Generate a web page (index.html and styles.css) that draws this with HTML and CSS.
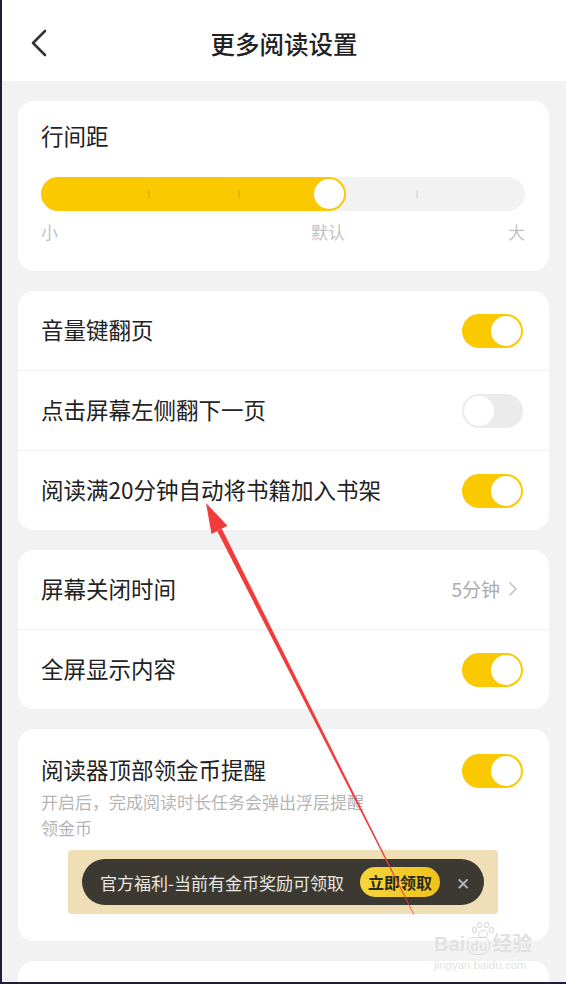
FILE: index.html
```html
<!DOCTYPE html>
<html lang="zh-CN">
<head>
    <meta charset="UTF-8">
    <meta name="viewport" content="width=device-width, initial-scale=1.0">
    <title>更多阅读设置</title>
    <link rel="stylesheet" href="styles.css">
</head>
<body>
    <div class="screen">
        <header class="topbar">
            <svg class="back" width="18" height="28" viewBox="0 0 18 28">
                <path d="M15 2 L3 14 L15 26" fill="none" stroke="#333" stroke-width="2.6" stroke-linecap="round" stroke-linejoin="round"/>
            </svg>
            <h1 class="title">更多阅读设置</h1>
            <span></span>
        </header>

        <main class="content">
            <section class="card spacing-card">
                <div class="card-label">行间距</div>
                <div class="slider">
                    <div class="slider-fill" style="width: 305px;"></div>
                    <span class="tick on" style="left: 107px;"></span>
                    <span class="tick on" style="left: 197px;"></span>
                    <span class="tick" style="left: 375px;"></span>
                    <span class="knob" style="left: 273px;"></span>
                </div>
                <div class="scale-labels">
                    <span>小</span>
                    <span class="mid">默认</span>
                    <span class="end">大</span>
                </div>
            </section>

            <section class="card">
                <div class="row">
                    <span class="row-label">音量键翻页</span>
                    <span class="switch on"></span>
                </div>
                <div class="row">
                    <span class="row-label">点击屏幕左侧翻下一页</span>
                    <span class="switch"></span>
                </div>
                <div class="row">
                    <span class="row-label">阅读满20分钟自动将书籍加入书架</span>
                    <span class="switch on"></span>
                </div>
            </section>

            <section class="card">
                <div class="row">
                    <span class="row-label">屏幕关闭时间</span>
                    <span class="value">5分钟
                        <svg width="10" height="16" viewBox="0 0 10 16">
                            <path d="M2 2 L8 8 L2 14" fill="none" stroke="#c4c4c4" stroke-width="1.6" stroke-linecap="round" stroke-linejoin="round"/>
                        </svg>
                    </span>
                </div>
                <div class="row">
                    <span class="row-label">全屏显示内容</span>
                    <span class="switch on"></span>
                </div>
            </section>

            <section class="card coin-card">
                <div class="coin-head">
                    <span class="row-label">阅读器顶部领金币提醒</span>
                    <span class="switch on"></span>
                </div>
                <p class="hint">开启后，完成阅读时长任务会弹出浮层提醒领金币</p>
                <div class="banner">
                    <div class="banner-pill">
                        <span class="banner-text">官方福利-当前有金币奖励可领取</span>
                        <span class="banner-btn">立即领取</span>
                        <span class="banner-close">✕</span>
                    </div>
                </div>
            </section>

            <section class="card last-card"></section>
        </main>

        <!-- annotation arrow drawn over the screenshot -->
        <svg class="arrow" width="566" height="984" viewBox="0 0 566 984">
            <polygon points="221.8,528.7 217.2,531 413.8,915 414.4,914.7" fill="#f23b3b"/>
            <polygon points="206,503 227.5,525.8 211.5,533.9" fill="#f23b3b"/>
        </svg>

        <div class="watermark">
            <div class="wm-paw">
                <i></i><i></i><i></i><i></i><b></b>
            </div>
            <div class="wm-logo">Bai<span class="wm-du">du</span><span class="wm-cn">经验</span></div>
            <div class="wm-url">jingyan.baidu.com</div>
        </div>
    </div>
</body>
</html>
```

FILE: styles.css
```css
* {
    box-sizing: border-box;
}
body {
    margin: 0;
    font-family: "Noto Sans CJK SC", "Noto Sans", sans-serif;
    color: #222;
}
.screen {
    position: relative;
    width: 566px;
    height: 984px;
    overflow: hidden;
    background: #f2f2f2;
    border-left: 2px solid #1e1e36;
    border-bottom: 2px solid #1e1e36;
}
.topbar {
    height: 81px;
    background: #fff;
    display: grid;
    grid-template-columns: 70px 1fr 70px;
    align-items: center;
    padding-top: 5px;
}
.back {
    margin-left: 28px;
}
.title {
    margin: 0;
    text-align: center;
    font-size: 24.5px;
    font-weight: 500;
    color: #222;
}
.content {
    display: flex;
    flex-direction: column;
    gap: 20px;
    padding: 20px 17px 0 16px;
}
.card {
    background: #fff;
    border-radius: 16px;
}

/* line spacing */
.spacing-card {
    padding: 18px 24px 24px 23px;
    height: 170px;
}
.card-label {
    font-size: 22.5px;
    line-height: 32px;
}
.slider {
    position: relative;
    margin-top: 26px;
    height: 34px;
    border-radius: 17px;
    background: #f2f2f2;
}
.slider-fill {
    height: 34px;
    border-radius: 17px;
    background: #fbc900;
}
.tick {
    position: absolute;
    top: 13px;
    width: 2px;
    height: 8px;
    background: #dedede;
}
.tick.on {
    background: #e2b500;
}
.knob {
    position: absolute;
    top: 2px;
    width: 30px;
    height: 30px;
    border-radius: 50%;
    background: #fff;
}
.scale-labels {
    display: flex;
    margin-top: 9px;
    font-size: 17px;
    line-height: 24px;
    color: #c2c2c2;
}
.scale-labels .mid {
    margin-left: 253px;
}
.scale-labels .end {
    margin-left: auto;
}

/* rows */
.row {
    display: flex;
    align-items: center;
    justify-content: space-between;
    height: 80px;
    padding: 0 26px 0 23px;
    font-size: 22.5px;
    border-top: 1px solid #f2f2f2;
}
.row:first-child {
    height: 79px;
    border-top: none;
}
.row-label {
    padding-bottom: 4px;
}
.switch {
    position: relative;
    width: 61px;
    height: 34px;
    border-radius: 17px;
    background: #ebebeb;
    flex-shrink: 0;
}
.switch::after {
    content: "";
    position: absolute;
    top: 2px;
    left: 2px;
    width: 30px;
    height: 30px;
    border-radius: 50%;
    background: #fff;
}
.switch.on {
    background: #fbc900;
}
.switch.on::after {
    left: 29px;
}
.value {
    display: flex;
    align-items: center;
    gap: 8px;
    font-size: 19px;
    color: #ababab;
    margin-right: 5px;
    padding-bottom: 2px;
}

/* coin reminder */
.coin-card {
    padding: 24px 26px 27px 23px;
}
.coin-head {
    display: flex;
    align-items: center;
    justify-content: space-between;
    font-size: 22.5px;
    line-height: 32px;
}
.hint {
    margin: 0 0 2px;
    width: 330px;
    font-size: 17px;
    line-height: 26px;
    color: #b5b5b5;
}
.banner {
    margin: 9px 0 0 27px;
    width: 430px;
    height: 64px;
    padding: 9px 14px;
    background: #f0dfb6;
    border-radius: 4px;
}
.banner-pill {
    display: flex;
    align-items: center;
    height: 46px;
    padding: 0 14px 0 18px;
    border-radius: 23px;
    background: #3b3932;
}
.banner-text {
    font-size: 17px;
    color: #e9e7e1;
}
.banner-btn {
    margin-left: 16px;
    width: 80px;
    height: 30px;
    line-height: 30px;
    text-align: center;
    border-radius: 15px;
    background: linear-gradient(90deg, #f7d53c, #efc21a);
    font-size: 16px;
    font-weight: 700;
    color: #2b2a1f;
}
.banner-close {
    margin-left: auto;
    font-size: 17px;
    color: #bcbcbc;
}
.last-card {
    height: 40px;
}

/* overlays */
.arrow {
    position: absolute;
    top: 0;
    left: -2px;
    pointer-events: none;
}
.watermark {
    position: absolute;
    left: 432px;
    top: 930px;
    color: rgba(205, 205, 205, 0.6);
    font-family: "Liberation Sans", sans-serif;
    text-shadow: 0 0 1px #fff;
}
.wm-paw {
    position: absolute;
    left: 38px;
    top: -8px;
    width: 22px;
    height: 18px;
}
.wm-paw i {
    position: absolute;
    width: 5px;
    height: 6px;
    border-radius: 50%;
    border: 1px solid rgba(200, 200, 200, 0.7);
}
.wm-paw i:nth-child(1) { left: 0; top: 5px; }
.wm-paw i:nth-child(2) { left: 5px; top: 0; }
.wm-paw i:nth-child(3) { left: 12px; top: 0; }
.wm-paw i:nth-child(4) { left: 17px; top: 5px; }
.wm-paw b {
    position: absolute;
    left: 6px;
    top: 8px;
    width: 10px;
    height: 8px;
    border-radius: 50%;
    border: 1px solid rgba(200, 200, 200, 0.7);
}
.wm-logo {
    font-size: 20px;
    font-weight: 700;
    line-height: 26px;
    white-space: nowrap;
}
.wm-du {
    display: inline-block;
    font-size: 14px;
    padding: 0 2px;
    margin: 0 2px;
    border: 1px solid rgba(200, 200, 200, 0.6);
    border-radius: 6px 6px 9px 9px;
    line-height: 16px;
}
.wm-cn {
    font-family: "Noto Sans CJK SC", sans-serif;
}
.wm-url {
    font-size: 11.5px;
    line-height: 14px;
    margin-top: 1px;
}
```
